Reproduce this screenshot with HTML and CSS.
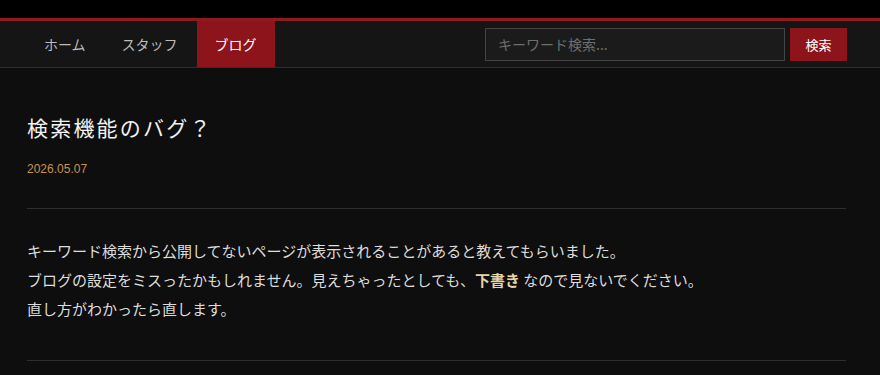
FILE: index.html
```html
<!DOCTYPE html>
<html lang="ja">
<head>
    <meta charset="UTF-8">
    <meta name="viewport" content="width=device-width, initial-scale=1.0">
    <title>検索機能のバグ？</title>
    <link rel="stylesheet" href="styles.css">
</head>
<body>

    <div class="topband"></div>

    <nav class="navbar">
        <ul class="nav-links">
            <li><a href="#">ホーム</a></li>
            <li><a href="#">スタッフ</a></li>
            <li class="active"><a href="#">ブログ</a></li>
        </ul>
        <form class="search-form">
            <input type="text" placeholder="キーワード検索...">
            <button type="submit">検索</button>
        </form>
    </nav>

    <main class="post">
        <h1 class="post-title">検索機能のバグ？</h1>
        <div class="post-date">2026.05.07</div>
        <hr>
        <div class="post-body">
            <p>キーワード検索から公開してないページが表示されることがあると教えてもらいました。</p>
            <p>ブログの設定をミスったかもしれません。見えちゃったとしても、<strong>下書き</strong> なので見ないでください。</p>
            <p>直し方がわかったら直します。</p>
        </div>
        <hr>
    </main>

</body>
</html>
```

FILE: styles.css
```css
body {
    margin: 0;
    background-color: #0e0e0e;
    color: #ddd;
    font-family: "Noto Sans CJK JP", "Noto Sans", sans-serif;
}
.topband {
    height: 18px;
    background-color: #000;
    border-bottom: 3px solid #8e1a20;
}
.navbar {
    display: flex;
    justify-content: space-between;
    align-items: stretch;
    height: 46px;
    padding: 0 33px 0 27px;
    background-color: #151515;
    border-bottom: 1px solid #2e2e2e;
}
.nav-links {
    display: flex;
    gap: 2px;
    list-style: none;
    margin: 0;
    padding: 0;
}
.nav-links li {
    display: flex;
}
.nav-links a {
    display: flex;
    align-items: center;
    padding: 0 17px;
    color: #bbb;
    font-size: 14px;
    text-decoration: none;
}
.nav-links .active a {
    padding: 0 18px 0 18px;
    background-color: #8e141c;
    color: #fff;
}
.search-form {
    display: flex;
    align-items: center;
    gap: 5px;
}
.search-form input {
    box-sizing: border-box;
    width: 300px;
    height: 33px;
    padding: 0 12px;
    background-color: #1b1b1b;
    border: 1px solid #444;
    color: #ddd;
    font-family: inherit;
    font-size: 14px;
}
.search-form input::placeholder {
    color: #6e6e6e;
}
.search-form button {
    height: 33px;
    width: 57px;
    background-color: #8e141c;
    color: #fff;
    border: none;
    font-family: inherit;
    font-size: 13px;
}
.post {
    width: 819px;
    padding: 0 0 0 27px;
}
.post-title {
    margin: 44px 0 0;
    font-size: 21px;
    font-weight: normal;
    letter-spacing: 2.2px;
    color: #f2f2f2;
}
.post-date {
    margin-top: 20px;
    font-family: "Liberation Sans", Arial, sans-serif;
    font-size: 12px;
    color: #c8944a;
}
hr {
    margin: 0;
    border: none;
    border-top: 1px solid #2e2e2e;
}
.post-date + hr {
    margin-top: 32px;
}
.post-body {
    padding: 27px 0 37px;
    font-size: 15px;
    line-height: 29px;
}
.post-body p {
    margin: 0;
}
.post-body strong {
    color: #e6d5a8;
}
```
